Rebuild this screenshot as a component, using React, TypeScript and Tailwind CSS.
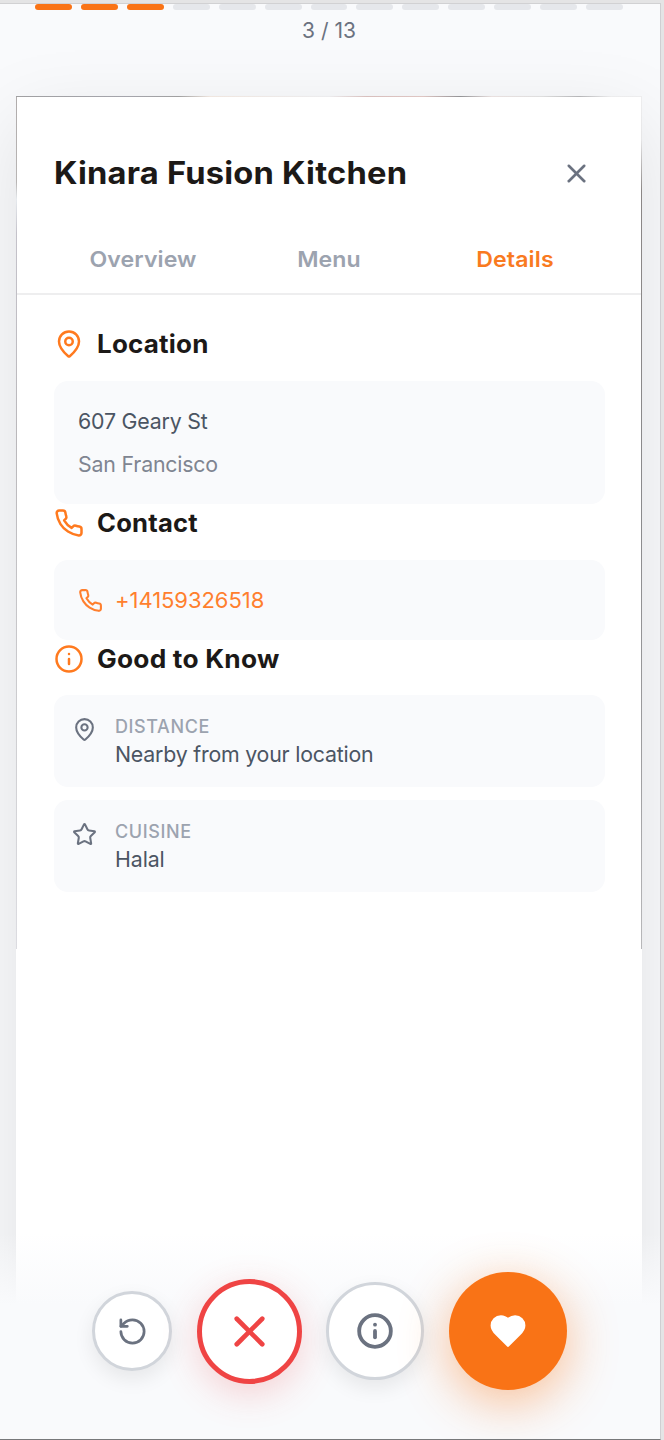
import React from 'react';
import { Info, MapPin, RotateCcw, Star, X } from 'lucide-react';

interface IconProps {
  className?: string;
}

interface SectionHeadingProps {
  icon: React.ReactNode;
  title: string;
  titleClass: string;
}

interface InfoRowProps {
  icon: React.ReactNode;
  label: string;
  value: string;
  valueClass: string;
}

const TOTAL = 13;
const CURRENT = 3;

const tabs = ['Overview', 'Menu', 'Details'];

const strokeProps = {
  viewBox: '0 0 24 24',
  stroke: 'currentColor',
  strokeWidth: 2,
  strokeLinecap: 'round',
  strokeLinejoin: 'round',
} as const;

const PhoneIcon: React.FC<IconProps> = ({ className }) => (
  <svg {...strokeProps} fill="none" className={className}>
    <path d="M22 16.92v3a2 2 0 0 1-2.18 2 19.79 19.79 0 0 1-8.63-3.07 19.5 19.5 0 0 1-6-6 19.79 19.79 0 0 1-3.07-8.67A2 2 0 0 1 4.11 2h3a2 2 0 0 1 2 1.72 12.84 12.84 0 0 0 .7 2.81 2 2 0 0 1-.45 2.11L8.09 9.91a16 16 0 0 0 6 6l1.27-1.27a2 2 0 0 1 2.11-.45 12.84 12.84 0 0 0 2.81.7A2 2 0 0 1 22 16.92z" />
  </svg>
);

const HeartIcon: React.FC<IconProps> = ({ className }) => (
  <svg {...strokeProps} fill="currentColor" className={className}>
    <path d="M19 14c1.49-1.46 3-3.21 3-5.5A5.5 5.5 0 0 0 16.5 3c-1.76 0-3 .5-4.5 2-1.5-1.5-2.74-2-4.5-2A5.5 5.5 0 0 0 2 8.5c0 2.3 1.5 4.05 3 5.5l7 7Z" />
  </svg>
);

const SectionHeading: React.FC<SectionHeadingProps> = ({ icon, title, titleClass }) => (
  <div className="flex h-[38px] items-center gap-[13px] text-[#ff7a1f]">
    {icon}
    <h2 className={`origin-left text-[25px] leading-none font-bold tracking-[0.2px] text-[#1c1917] ${titleClass}`}>
      {title}
    </h2>
  </div>
);

const InfoRow: React.FC<InfoRowProps> = ({ icon, label, value, valueClass }) => (
  <div className="flex h-[92px] rounded-[14px] bg-[#f9fafc] pt-[19px] pl-[18px]">
    <div className="mt-[3px] w-[43px] text-[#6b7280]">{icon}</div>
    <div>
      <div className="text-[18px] leading-[25px] font-medium tracking-[0.6px] text-[#9ca3af]">{label}</div>
      <div className={`origin-left text-[22px] leading-[30px] text-[#4b5563] ${valueClass}`}>{value}</div>
    </div>
  </div>
);

export default function App() {
  return (
    <div className="flex h-[1440px] w-[664px] flex-col bg-[#e4e4e5] pt-[3px] font-['Inter',sans-serif]">
      <div className="relative flex w-[661px] flex-1 flex-col overflow-hidden border-t border-r border-b border-t-[#d1d1d3] border-r-[#cfcfd2] border-b-[#77787a] bg-[#f9fafc]">
        <div className="flex gap-[9px] pr-[37px] pl-[35px]">
          {Array.from({ length: TOTAL }, (_, i) => (
            <div
              key={i}
              className={`h-[6px] flex-1 rounded-full ${i < CURRENT ? 'bg-[#f97316]' : 'bg-[#e5e7eb]'}`}
            />
          ))}
        </div>
        <div className="mt-[6px] pr-[2px] text-center text-[21px] leading-[30px] text-[#6b7280]">
          {CURRENT} / {TOTAL}
        </div>

        {/* Card with the sliver of the photo showing along its edges */}
        <div className="mt-[50px] ml-4 h-[1300px] w-[626px] shrink-0 bg-white shadow-[0_24px_75px_rgba(0,0,0,0.10)]">
          <div className="h-px bg-[linear-gradient(90deg,#a0a0a2_0%,#a5a5ac_18%,#a0a0a0_26%,#f0e6df_31%,#ececee_50%,#d8bfbd_56%,#dfc6c3_65%,#939396_71%,#e9e0df_76%,#dedede_84%,#b5b5b7_90%,#ececed_95%,#ededee_100%)]" />
          <div className="flex">
            <div className="h-[852px] w-px bg-[linear-gradient(180deg,#b0acac_0%,#b8b5b4_10%,#e6eaee_12%,#c4c2ca_16%,#bab8bb_40%,#cfcfd2_75%,#dcdce1_100%)]" />
            <div className="flex-1">
              <div className="flex h-[150px] items-center justify-between pt-[3px] pr-[49px] pl-[37px]">
                <h1 className="origin-left scale-x-[1.054] text-[31px] font-bold tracking-[0.2px] text-[#1c1917]">
                  Kinara Fusion Kitchen
                </h1>
                <X className="h-[31px] w-[31px] text-[#6b7280]" strokeWidth={2} />
              </div>
              <div className="flex h-[48px] border-b-2 border-[#eeeeef] px-[33px]">
                {tabs.map((tab) => (
                  <div
                    key={tab}
                    className={`flex-1 scale-x-[1.05] text-center text-[22px] leading-[25px] font-semibold tracking-[0.1px] ${
                      tab === 'Details' ? 'text-[#f97a1f]' : 'text-[#9ca3af]'
                    }`}
                  >
                    {tab}
                  </div>
                ))}
              </div>

              <div className="pt-[30px] pr-[36px] pl-[37px]">
                <SectionHeading
                  icon={<MapPin className="h-[30px] w-[30px]" />}
                  title="Location"
                  titleClass="scale-x-[1.04]"
                />
                <div className="mt-[18px] h-[123px] rounded-[14px] bg-[#f9fafc] pt-[19px] pl-6 text-[22px] leading-[43px] tracking-[-0.2px]">
                  <div className="origin-left scale-x-[0.97] text-[#4b5563]">607 Geary St</div>
                  <div className="origin-left scale-x-[0.97] text-[#7f8591]">San Francisco</div>
                </div>

                <SectionHeading
                  icon={<PhoneIcon className="h-[30px] w-[30px]" />}
                  title="Contact"
                  titleClass="scale-x-[1.025]"
                />
                <div className="mt-[18px] flex h-[80px] items-center gap-[12px] rounded-[14px] bg-[#f9fafc] pl-6 text-[22px] tracking-[-0.05px] text-[#ff7f2e]">
                  <PhoneIcon className="h-[25px] w-[25px]" />
                  +14159326518
                </div>

                <SectionHeading
                  icon={<Info className="h-[30px] w-[30px]" />}
                  title="Good to Know"
                  titleClass="scale-x-[1.052]"
                />
                <div className="mt-[17px] flex flex-col gap-[13px]">
                  <InfoRow
                    icon={<MapPin className="h-[25px] w-[25px]" />}
                    label="DISTANCE"
                    value="Nearby from your location"
                    valueClass="scale-x-[0.97] tracking-[-0.22px]"
                  />
                  <InfoRow
                    icon={<Star className="h-[25px] w-[25px]" />}
                    label="CUISINE"
                    value="Halal"
                    valueClass="scale-x-[0.97] tracking-[-0.1px]"
                  />
                </div>
              </div>
            </div>
            <div className="h-[852px] w-px bg-[linear-gradient(180deg,#ededee_0%,#e6e6e7_5%,#8b8786_11%,#8b8b8d_50%,#a0a0a2_80%,#b8b8ba_100%)]" />
          </div>
        </div>

        {/* Action bar over the bottom of the card */}
        <div className="absolute inset-x-0 bottom-0 flex h-[216px] items-center justify-center gap-[24.5px] bg-[linear-gradient(180deg,rgba(249,250,252,0)_10px,rgba(249,250,252,0.5)_44px,#f9fafc_82px)] pr-px">
          <button className="flex h-[80px] w-[80px] items-center justify-center rounded-full border-[3px] border-[#d1d5db] bg-white text-[#6b7280] shadow-[0_8px_20px_rgba(0,0,0,0.08)]">
            <RotateCcw className="h-[31px] w-[31px]" strokeWidth={2.1} />
          </button>
          <button className="flex h-[105px] w-[105px] items-center justify-center rounded-full border-[5px] border-[#ef4444] bg-white text-[#ef4444] shadow-[0_10px_36px_rgba(239,68,68,0.22)]">
            <X className="h-[51px] w-[51px]" strokeWidth={2.2} />
          </button>
          <button className="flex h-[98px] w-[98px] items-center justify-center rounded-full border-[3px] border-[#d1d5db] bg-white text-[#6b7280] shadow-[0_8px_20px_rgba(0,0,0,0.08)]">
            <Info className="h-[38px] w-[38px]" strokeWidth={2.4} />
          </button>
          <button className="flex h-[118px] w-[118px] items-center justify-center rounded-full bg-[#f97316] text-white shadow-[0_12px_50px_rgba(249,115,22,0.45)]">
            <HeartIcon className="h-[38px] w-[38px]" />
          </button>
        </div>
      </div>
    </div>
  );
}
